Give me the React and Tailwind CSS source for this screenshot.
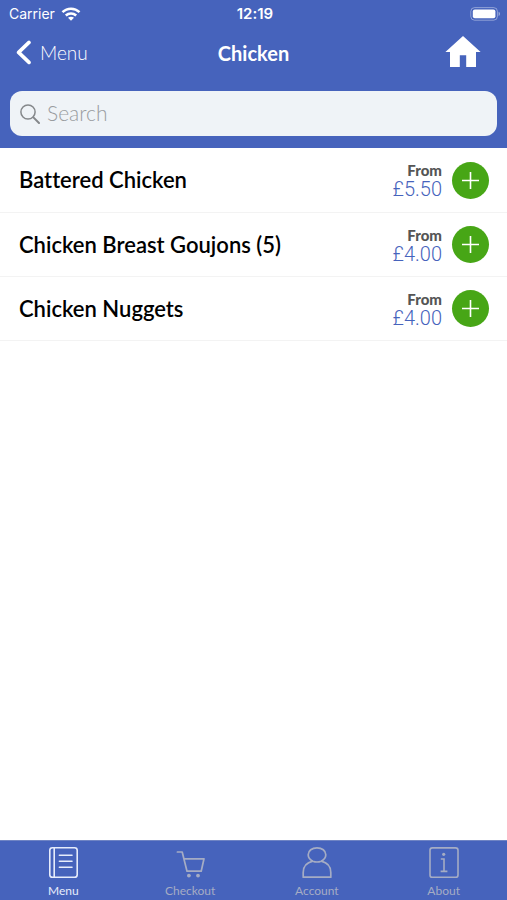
import React, { useState } from 'react';

const items = [
    { id: 'battered-chicken', name: 'Battered Chicken', price: '£5.50' },
    { id: 'chicken-goujons', name: 'Chicken Breast Goujons (5)', price: '£4.00' },
    { id: 'chicken-nuggets', name: 'Chicken Nuggets', price: '£4.00' },
];

const WifiIcon = () => (
    <svg width="20" height="14" viewBox="0 0 20 14" fill="none" stroke="white" strokeWidth="2.5" aria-hidden="true">
        <path d="M1.5 5.2C6.3 0.5 13.7 0.5 18.5 5.2" />
        <path d="M4.8 8.5C7.8 5.7 12.2 5.7 15.2 8.5" />
        <path d="M10 13.8L7 10.8C8.7 9.3 11.3 9.3 13 10.8Z" fill="white" stroke="none" />
    </svg>
);

const BatteryIcon = () => (
    <svg width="31" height="14" viewBox="0 0 31 14" fill="none" aria-hidden="true">
        <rect x="0.8" y="0.6" width="26.6" height="12.6" rx="3.8" stroke="white" strokeOpacity="0.4" />
        <rect x="2.8" y="2.5" width="22.6" height="8.8" rx="2" fill="white" />
        <path d="M28.6 4.8C30.4 5.4 30.4 8.4 28.6 9Z" fill="white" fillOpacity="0.5" />
    </svg>
);

const MenuIcon = () => (
    <svg width="32" height="34" viewBox="0 0 32 34" fill="none" stroke="currentColor" strokeWidth="1.6" strokeLinecap="round" aria-hidden="true">
        <rect x="2.8" y="1.7" width="27.4" height="29.6" rx="2.6" />
        <path d="M7.2 2V31M12.4 9.2H25M12.4 15.2H25M12.4 21.2H25" />
    </svg>
);

const CartIcon = () => (
    <svg width="32" height="34" viewBox="0 0 32 34" fill="none" stroke="currentColor" strokeWidth="1.7" strokeLinecap="round" strokeLinejoin="round" aria-hidden="true">
        <path d="M3.4 6H8.2L13 25.2H27.2L30 12.8H10" />
        <circle cx="14.9" cy="29.6" r="1.9" fill="currentColor" stroke="none" />
        <circle cx="24" cy="29.6" r="1.9" fill="currentColor" stroke="none" />
    </svg>
);

const AccountIcon = () => (
    <svg width="32" height="34" viewBox="0 0 32 34" fill="none" stroke="currentColor" strokeWidth="1.7" strokeLinejoin="round" aria-hidden="true">
        <path d="M11.8 15.2C9 13.7 7.2 11.4 7.2 8.7C7.2 4.6 11 1.9 16 1.9S24.8 4.6 24.8 8.7C24.8 11.4 23 13.7 20.2 15.2C17.6 16.2 14.4 16.2 11.8 15.2Z" />
        <path d="M11.8 15.2C5.6 16.6 2.2 21 2.2 26.6V31.2H29.8V26.6C29.8 21 26.4 16.6 20.2 15.2" />
    </svg>
);

const AboutIcon = () => (
    <svg width="32" height="34" viewBox="0 0 32 34" fill="none" stroke="currentColor" strokeWidth="1.6" aria-hidden="true">
        <rect x="2" y="1.9" width="28" height="29.4" rx="2.4" />
        <path d="M12.8 13H16V25.3M12.6 25.4H19.4" />
        <circle cx="15.7" cy="8.3" r="1.6" fill="currentColor" stroke="none" />
    </svg>
);

const tabs = [
    { id: 'menu', label: 'Menu', Icon: MenuIcon },
    { id: 'checkout', label: 'Checkout', Icon: CartIcon },
    { id: 'account', label: 'Account', Icon: AccountIcon },
    { id: 'about', label: 'About', Icon: AboutIcon },
];

const App = () => {
    const [activeTab, setActiveTab] = useState('menu');
    const [search, setSearch] = useState('');

    const visible = items.filter((item) => item.name.toLowerCase().includes(search.toLowerCase()));

    return (
        <div className="flex min-h-screen flex-col bg-white font-[Lato,sans-serif] [font-variant-ligatures:none]">
            <header className="bg-[#4663bc] text-white">
                {/* Status bar */}
                <div className="grid h-[27px] grid-cols-3 items-center pl-[9px] pr-1.5 font-[Inter,sans-serif] text-sm">
                    <div className="flex items-center gap-1.5">
                        <span>Carrier</span>
                        <WifiIcon />
                    </div>
                    <span className="text-center text-[15px] font-semibold">12:19</span>
                    <div className="flex justify-end">
                        <BatteryIcon />
                    </div>
                </div>

                {/* Navigation */}
                <nav className="grid h-[52px] grid-cols-3 items-center px-4 text-xl">
                    <a href="#menu" className="flex items-center gap-2">
                        <svg width="16" height="26" viewBox="0 0 16 26" fill="none" stroke="white" strokeWidth="3.6" strokeLinecap="round" strokeLinejoin="round" aria-hidden="true">
                            <path d="M13 2.4L2.6 12.4L13 22.4" />
                        </svg>
                        <span className="text-[19px] font-light">Menu</span>
                    </a>
                    <h1 className="text-center font-bold">Chicken</h1>
                    <a href="#home" aria-label="Home" className="justify-self-end pr-2.5">
                        <svg width="36" height="34" viewBox="0 0 36 34" fill="white" aria-hidden="true">
                            <path d="M18 0L35.6 16H31V31H21.2V19.2H14.8V31H5V16H0.4Z" />
                        </svg>
                    </a>
                </nav>

                {/* Search */}
                <div className="px-2.5 py-3">
                    <label className="flex h-[45px] items-center gap-[7px] rounded-xl bg-[#eff3f7] pl-2.5 pr-3">
                        <svg width="20" height="20" viewBox="0 0 20 20" fill="none" stroke="#85888b" strokeWidth="1.5" strokeLinecap="round" aria-hidden="true">
                            <circle cx="8" cy="8" r="7.1" />
                            <path d="M13.4 13.4L19 19" strokeWidth="2" />
                        </svg>
                        <input
                            type="text"
                            aria-label="Search"
                            placeholder="Search"
                            value={search}
                            onChange={(e) => setSearch(e.target.value)}
                            className="min-w-0 flex-1 bg-transparent pb-0.5 text-[21px] font-light text-gray-800 outline-none placeholder:text-[#999c9f]"
                        />
                    </label>
                </div>
            </header>

            {/* Items */}
            <main className="flex-1">
                <ul className="border-b border-[#f3f3f3]">
                    {visible.map((item) => (
                        <li key={item.id} className="flex h-16 items-center border-t border-[#f3f3f3] pl-[19px] pr-[18px] first:border-t-0">
                            <h2 className="flex-1 text-[22px] leading-7 font-semibold text-black">{item.name}</h2>
                            <div className="text-right">
                                <p className="text-[15px] leading-[18px] font-black text-[#555555]">From</p>
                                <p className="font-[Roboto,sans-serif] text-xl leading-5 font-light text-[#4663bc]">{item.price}</p>
                            </div>
                            <button aria-label={`Add ${item.name}`} className="ml-2.5 flex size-[37px] items-center justify-center rounded-full bg-[#47a616]">
                                <svg width="19" height="19" viewBox="0 0 19 19" stroke="white" strokeWidth="1.6" aria-hidden="true">
                                    <path d="M9.5 1V18M1 9.5H18" />
                                </svg>
                            </button>
                        </li>
                    ))}
                </ul>
            </main>

            {/* Tab bar */}
            <nav className="grid h-[60px] grid-cols-4 border-t border-[#6f84c4] bg-[#4663bc]">
                {tabs.map(({ id, label, Icon }) => (
                    <button
                        key={id}
                        onClick={() => setActiveTab(id)}
                        className={`flex flex-col items-center pt-[5px] ${activeTab === id ? 'text-[#e6ecfb]' : 'text-[#a5acc4]'}`}
                    >
                        <Icon />
                        <span className="text-xs leading-[22px]">{label}</span>
                    </button>
                ))}
            </nav>
        </div>
    );
};

export default App;
